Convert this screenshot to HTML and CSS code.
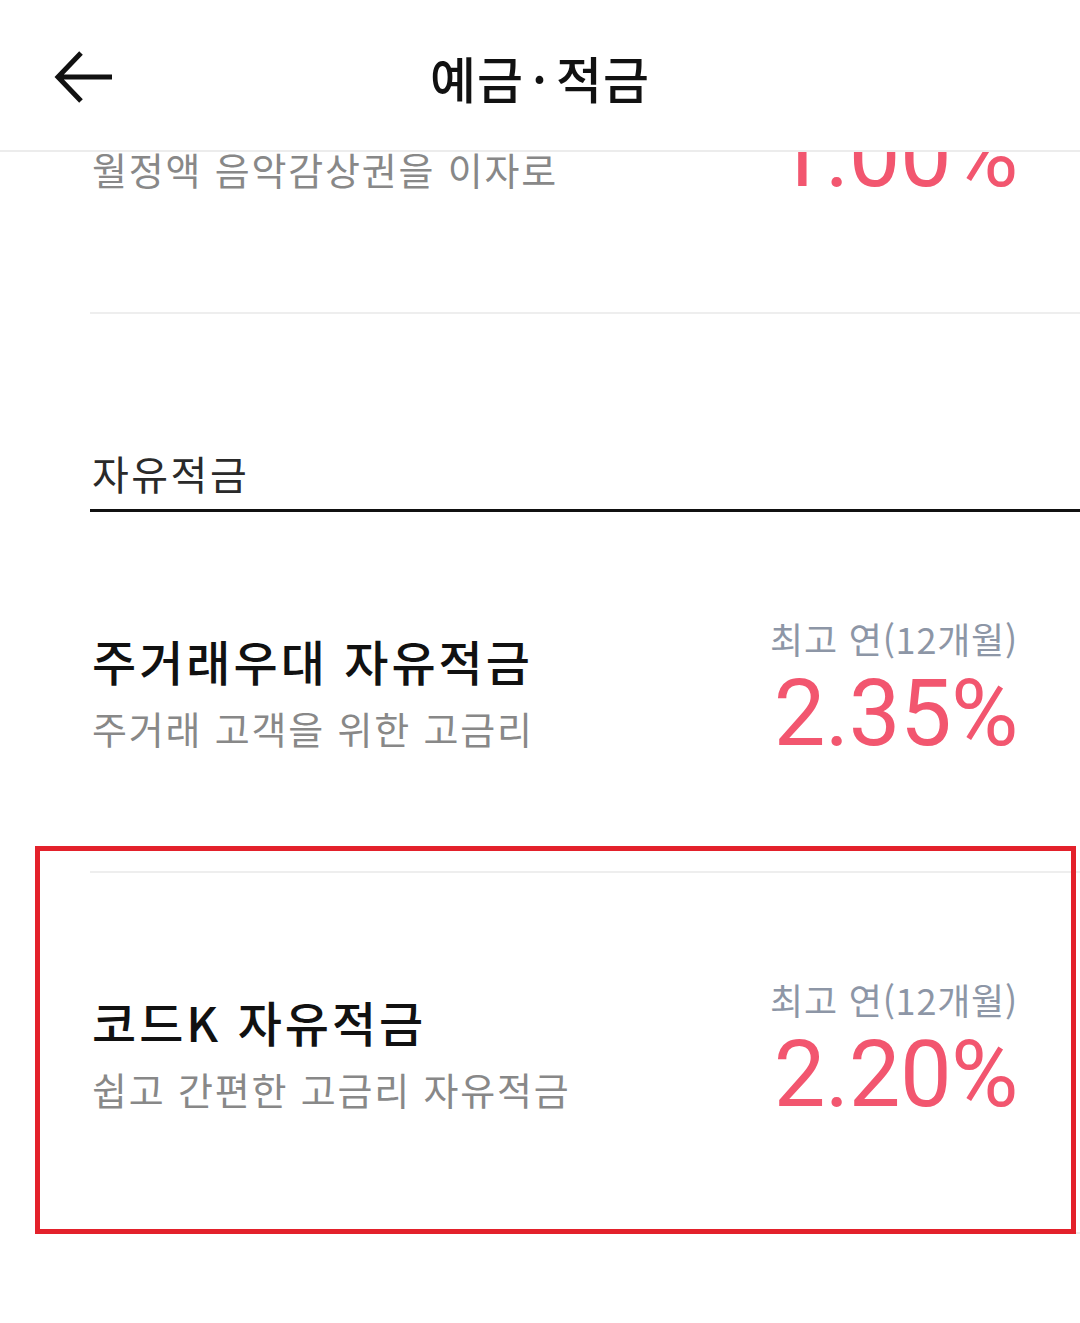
FILE: index.html
```html
<!DOCTYPE html>
<html lang="ko">
<head>
<meta charset="utf-8">
<title>예금·적금</title>
<link rel="stylesheet" href="styles.css">
</head>
<body>
<header class="topbar">
  <button class="back" aria-label="뒤로">
    <svg width="64" height="56" viewBox="0 0 64 56" aria-hidden="true">
      <path d="M60 28 H6 M29 4 L6 28 L29 52" fill="none" stroke="#111" stroke-width="5" stroke-linecap="butt" stroke-linejoin="miter"/>
    </svg>
  </button>
  <h1 class="title">예금<span class="dot">·</span>적금</h1>
</header>
<main class="content">
  <div class="list">
    <div class="row row-first">
      <div class="info">
        <div class="name">뮤직 정기적금</div>
        <div class="desc">월정액 음악감상권을 이자로</div>
      </div>
      <div class="rate">
        <div class="rate-label">최고 연(12개월)</div>
        <div class="rate-value">1.00%</div>
      </div>
    </div>
    <div class="section">자유적금</div>
    <div class="row">
      <div class="info">
        <div class="name">주거래우대 자유적금</div>
        <div class="desc">주거래 고객을 위한 고금리</div>
      </div>
      <div class="rate">
        <div class="rate-label">최고 연(12개월)</div>
        <div class="rate-value">2.35%</div>
      </div>
    </div>
    <div class="row row-marked">
      <div class="info">
        <div class="name">코드K 자유적금</div>
        <div class="desc">쉽고 간편한 고금리 자유적금</div>
      </div>
      <div class="rate">
        <div class="rate-label">최고 연(12개월)</div>
        <div class="rate-value">2.20%</div>
      </div>
      <div class="highlight"></div>
    </div>
  </div>
</main>
</body>
</html>
```
FILE: styles.css
```css
html, body {
  margin: 0;
  padding: 0;
  background: #fff;
}
body {
  width: 1080px;
  height: 1323px;
  overflow: hidden;
  font-family: "Noto Sans CJK KR", "Noto Sans", sans-serif;
  color: #111;
}
.topbar {
  height: 150px;
  border-bottom: 2px solid #ececec;
  display: flex;
  align-items: center;
  justify-content: center;
  position: relative;
  background: #fff;
}
.back {
  position: absolute;
  left: 52px;
  top: 49px;
  padding: 0;
  margin: 0;
  border: 0;
  background: none;
  width: 64px;
  height: 56px;
  display: block;
}
.back svg { display: block; }
.title {
  margin: 0;
  font-size: 50px;
  line-height: 60px;
  font-weight: 500;
  color: #111;
  letter-spacing: 1px;
  padding-top: 4px;
}
.title .dot {
  margin: 0 8px;
}
.content {
  height: 1171px;
  overflow: hidden;
}
.list {
  margin-left: 90px;
}
.row {
  height: 359px;
  border-bottom: 2px solid #eeeeee;
  display: flex;
  align-items: center;
  justify-content: space-between;
  padding: 0 62px 0 2px;
  position: relative;
}
.row-first {
  margin-top: -199px;
}
.info {
  display: flex;
  flex-direction: column;
}
.name {
  font-size: 48px;
  line-height: 60px;
  font-weight: 500;
  color: #111;
  letter-spacing: 3px;
}
.desc {
  margin-top: 13px;
  font-size: 38px;
  line-height: 50px;
  color: #888;
  letter-spacing: 1.8px;
}
.rate {
  display: flex;
  flex-direction: column;
  align-items: flex-end;
  padding-bottom: 9px;
}
.rate-label {
  font-size: 36px;
  line-height: 44px;
  color: #8d96a6;
  letter-spacing: 0.8px;
}
.rate-value {
  margin-top: 9px;
  font-family: Roboto, "Noto Sans", sans-serif;
  font-size: 92px;
  line-height: 90px;
  color: #f2566f;
  letter-spacing: -0.5px;
}
.section {
  height: 183px;
  padding: 0 0 12px 2px;
  border-bottom: 3px solid #111;
  display: flex;
  align-items: flex-end;
  font-size: 40px;
  line-height: 48px;
  color: #2a2a2a;
  letter-spacing: 2.5px;
}
.highlight {
  position: absolute;
  left: -55px;
  top: -27px;
  width: 1041px;
  height: 388px;
  box-sizing: border-box;
  border: 5px solid #e3212b;
  pointer-events: none;
}
```
